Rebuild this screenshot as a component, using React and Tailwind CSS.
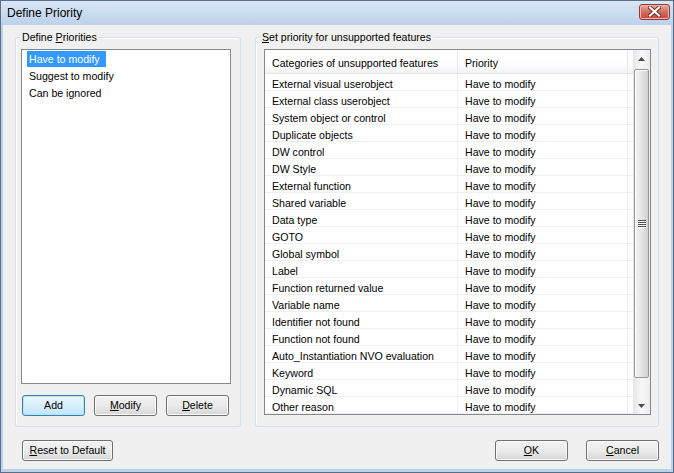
import React from "react";

const rows = [
  "External visual userobject",
  "External class userobject",
  "System object or control",
  "Duplicate objects",
  "DW control",
  "DW Style",
  "External function",
  "Shared variable",
  "Data type",
  "GOTO",
  "Global symbol",
  "Label",
  "Function returned value",
  "Variable name",
  "Identifier not found",
  "Function not found",
  "Auto_Instantiation NVO evaluation",
  "Keyword",
  "Dynamic SQL",
  "Other reason",
];

function Btn({ children, className = "", primary = false }) {
  return (
    <div
      className={
        "h-[21px] flex items-center justify-center rounded-[3px] border text-[10.6px] text-black " +
        (primary
          ? "border-[#3c7fb1] bg-gradient-to-b from-[#eaf6fd] via-[#d9f0fc] to-[#bee6fd] shadow-[inset_0_0_0_1px_#b6e3fb] "
          : "border-[#707070] bg-gradient-to-b from-[#f2f2f2] via-[#ebebeb] to-[#d6d6d6] shadow-[inset_0_0_0_1px_#fcfcfc] ") +
        className
      }
    >
      {children}
    </div>
  );
}

function Group({ label, className = "", children }) {
  return (
    <div className={"relative border border-[#d5dfe5] rounded-[3px] shadow-[inset_1px_1px_0_#fff] " + className}>
      <span className="absolute left-[4px] top-[-8px] px-[2px] bg-[#f0f0f0] text-[10.6px] leading-[14px] text-black whitespace-nowrap">
        {label}
      </span>
      {children}
    </div>
  );
}

function Arrow({ up }) {
  return (
    <svg width="7" height="4" viewBox="0 0 7 4">
      {up ? <path d="M3.5 0 L7 4 L0 4 Z" fill="#4d4d4d" /> : <path d="M0 0 L7 0 L3.5 4 Z" fill="#4d4d4d" />}
    </svg>
  );
}

export default function App() {
  return (
    <div className="w-[674px] h-[473px] border border-[#5a7089] bg-[#bcd2ea] flex flex-col font-['Liberation_Sans',Arial,sans-serif] overflow-hidden">
      {/* Title bar */}
      <div className="h-[24px] flex items-center pl-[6px] pr-[3px] bg-gradient-to-b from-[#d9e6f4] to-[#bcd2ea]">
        <span className="text-[12px] text-black">Define Priority</span>
        <div className="ml-auto mt-[-3px] w-[31px] h-[16px] rounded-[3px] border border-[#8a3b33] bg-gradient-to-b from-[#e8a99f] via-[#d46a5d] to-[#c4473a] flex items-center justify-center shadow-[inset_0_0_0_1px_#eeb8b0]">
          <svg width="13" height="11" viewBox="0 0 13 11">
            <path d="M2 1.5 L11 9.5 M11 1.5 L2 9.5" stroke="#6b2a24" strokeWidth="4" strokeLinecap="square" />
            <path d="M2 1.5 L11 9.5 M11 1.5 L2 9.5" stroke="#ffffff" strokeWidth="2.2" strokeLinecap="square" />
          </svg>
        </div>
      </div>
      {/* Frame */}
      <div className="flex-1 flex px-[2px] pb-[3px]">
        <div className="flex-1 bg-[#f0f0f0] flex flex-col pt-[12px] px-[12px] pb-[8px]">
          <div className="flex h-[390px]">
            {/* Left group */}
            <Group
              label={
                <>
                  Define <u className="underline-offset-[1px]">P</u>riorities
                </>
              }
              className="w-[226px] h-[390px] flex flex-col pt-[11px] pl-[5px] pr-[9px] pb-[10px]"
            >
              <div className="w-[210px] h-[335px] border border-[#828790] bg-white pl-[5px] pt-[1px] flex flex-col">
                <div className="h-[17px] flex items-start">
                  <span className="h-[16px] leading-[16px] pl-[2px] pr-[6px] bg-[#3399ff] text-white text-[10.6px]">
                    Have to modify
                  </span>
                </div>
                <div className="h-[17px] flex items-start">
                  <span className="h-[16px] leading-[16px] pl-[2px] text-black text-[10.6px]">Suggest to modify</span>
                </div>
                <div className="h-[17px] flex items-start">
                  <span className="h-[16px] leading-[16px] pl-[2px] text-black text-[10.6px]">Can be ignored</span>
                </div>
              </div>
              <div className="flex mt-[11px]">
                <Btn primary className="ml-[1px] w-[63px]">Add</Btn>
                <Btn className="ml-[9px] w-[63px]">
                  <span>
                    <u className="underline-offset-[1px]">M</u>odify
                  </span>
                </Btn>
                <Btn className="ml-[9px] w-[63px]">
                  <span>
                    <u className="underline-offset-[1px]">D</u>elete
                  </span>
                </Btn>
              </div>
            </Group>

            {/* Right group */}
            <Group
              label={
                <>
                  <u className="underline-offset-[1px]">S</u>et priority for unsupported features
                </>
              }
              className="ml-[14px] w-[404px] h-[390px] pt-[11px] pl-[8px] pr-[7px] pb-[11px]"
            >
              <div className="w-[387px] h-[366px] border border-[#828790] bg-white flex">
                <div className="w-[368px] flex flex-col">
                  {/* Header */}
                  <div className="h-[24px] flex bg-gradient-to-b from-white via-white to-[#f3f4f6] border-b border-[#e5e5e5] text-[10.6px] text-black">
                    <div className="w-[193px] border-r border-[#e3e8ee] pl-[7px] pt-[5px] flex items-center">
                      Categories of unsupported features
                    </div>
                    <div className="w-[170px] border-r border-[#e3e8ee] pl-[7px] pt-[5px] flex items-center">Priority</div>
                    <div className="flex-1" />
                  </div>
                  {rows.map((r) => (
                    <div key={r} className="h-[17px] flex border-b border-[#f0f0f0] text-[10.6px] text-black">
                      <div className="w-[193px] border-r border-[#f0f0f0] pl-[7px] pt-[5px] flex items-center whitespace-nowrap">
                        {r}
                      </div>
                      <div className="w-[170px] border-r border-[#f0f0f0] pl-[7px] pt-[5px] flex items-center">
                        Have to modify
                      </div>
                      <div className="flex-1" />
                    </div>
                  ))}
                </div>
                {/* Scrollbar */}
                <div className="w-[17px] flex flex-col bg-gradient-to-r from-[#e6e6e6] via-[#f7f7f7] to-[#ededed]">
                  <div className="h-[17px] flex items-center justify-center">
                    <Arrow up />
                  </div>
                  <div className="mt-[2px] h-[309px] mx-[1px] rounded-[2px] border border-[#979797] bg-gradient-to-r from-[#f4f4f4] via-[#e6e6e6] to-[#cfcfcf] shadow-[inset_1px_1px_0_#fff] flex items-center justify-center">
                    <div className="flex flex-col gap-[1px]">
                      <div className="w-[8px] h-[1px] bg-[#4f4f4f] shadow-[0_1px_0_#fff]" />
                      <div className="w-[8px] h-[1px] bg-[#4f4f4f] shadow-[0_1px_0_#fff]" />
                      <div className="w-[8px] h-[1px] bg-[#4f4f4f] shadow-[0_1px_0_#fff]" />
                      <div className="w-[8px] h-[1px] bg-[#4f4f4f] shadow-[0_1px_0_#fff]" />
                    </div>
                  </div>
                  <div className="flex-1" />
                  <div className="h-[17px] flex items-center justify-center">
                    <Arrow />
                  </div>
                </div>
              </div>
            </Group>
          </div>

          {/* Bottom row */}
          <div className="mt-[13px] flex">
            <Btn className="ml-[7px] w-[91px]">
              <span>
                <u className="underline-offset-[1px]">R</u>eset to Default
              </span>
            </Btn>
            <Btn className="ml-auto w-[73px]">
              <span>
                <u className="underline-offset-[1px]">O</u>K
              </span>
            </Btn>
            <Btn className="ml-[18px] w-[73px]">
              <span>
                <u className="underline-offset-[1px]">C</u>ancel
              </span>
            </Btn>
          </div>
        </div>
      </div>
    </div>
  );
}
